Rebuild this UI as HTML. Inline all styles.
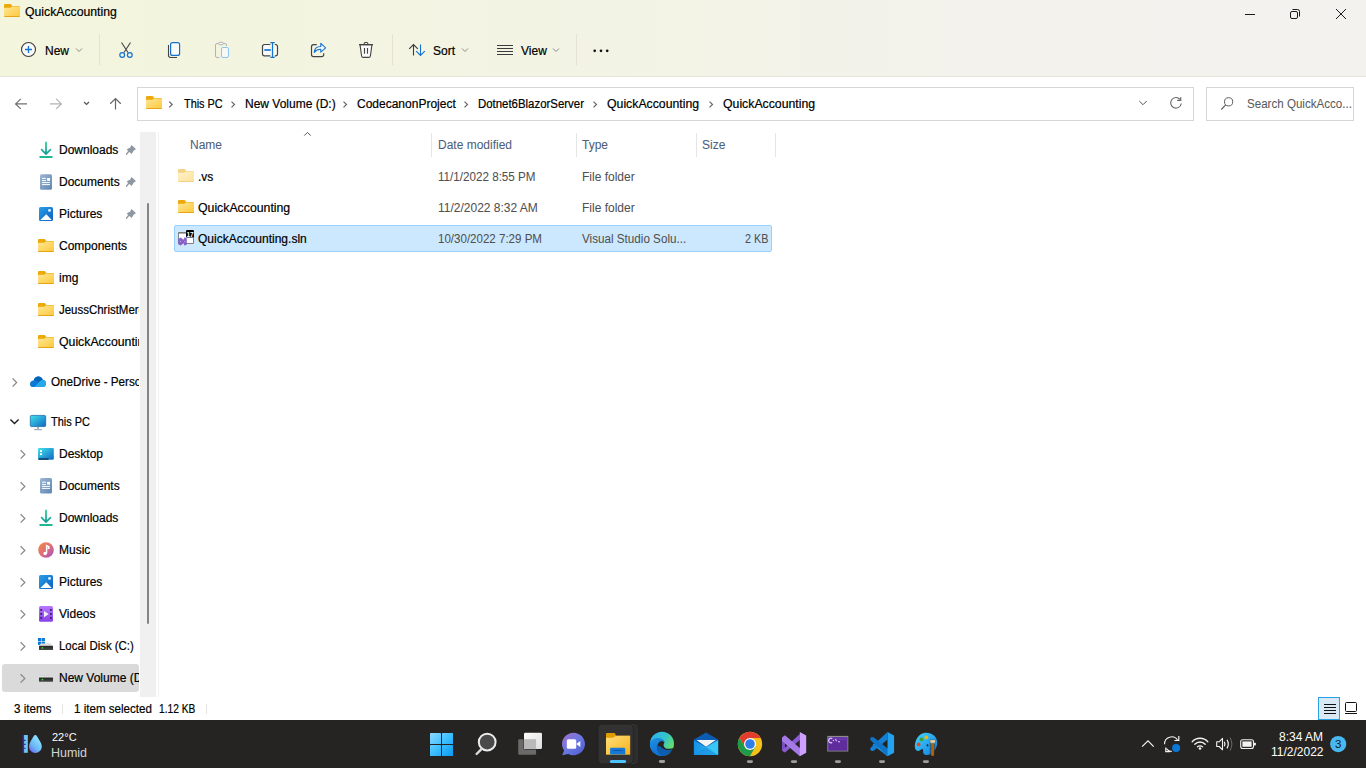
<!DOCTYPE html>
<html><head><meta charset="utf-8">
<style>
*{margin:0;padding:0;box-sizing:border-box}
html,body{width:1366px;height:768px;overflow:hidden;background:#fff;font-family:"Liberation Sans",sans-serif;font-size:12px;color:#000}
.a{position:absolute}
.t{position:absolute;white-space:nowrap;line-height:12px;font-size:12px;transform-origin:0 0;-webkit-text-stroke:0.2px currentColor}
svg{position:absolute;overflow:visible}
#top{left:0;top:0;width:1366px;height:77px;background:linear-gradient(90deg,#f4f5dd 0%,#f3f4e1 25%,#f3f3e6 50%,#f3f2ec 70%,#f3f2ef 100%);border-bottom:1px solid #e6e5da}
.sep{position:absolute;width:1px;background:#e3e2d4}
.chev{stroke:#8a8a8a;fill:none;stroke-width:1}
.bc{stroke:#6b6b6b;fill:none;stroke-width:1.1}
</style></head><body>
<div id="top" class="a"></div>

<!-- Title -->
<div class="t" style="left:25px;top:6px;transform:scaleX(1.02)">QuickAccounting</div>

<!-- Toolbar text -->
<div class="t" style="left:45px;top:45px">New</div>
<div class="t" style="left:433px;top:45px">Sort</div>
<div class="t" style="left:521px;top:45px">View</div>
<div class="sep" style="left:99px;top:34px;height:31px"></div>
<div class="sep" style="left:392px;top:34px;height:31px"></div>
<div class="sep" style="left:576px;top:34px;height:31px"></div>

<!-- Address bar -->
<div class="a" style="left:137px;top:87px;width:1057px;height:34px;border:1px solid #d6d6d6;background:#fff"></div>
<div class="a" style="left:1206px;top:87px;width:148px;height:34px;border:1px solid #d6d6d6;background:#fff"></div>
<div class="t" style="left:184px;top:98px;transform:scaleX(.907)">This PC</div>
<div class="t" style="left:245px;top:98px">New Volume (D:)</div>
<div class="t" style="left:357px;top:98px">CodecanonProject</div>
<div class="t" style="left:478px;top:98px;transform:scaleX(.951)">Dotnet6BlazorServer</div>
<div class="t" style="left:607px;top:98px;transform:scaleX(1.023)">QuickAccounting</div>
<div class="t" style="left:723px;top:98px;transform:scaleX(1.023)">QuickAccounting</div>
<div class="t" style="left:1247px;top:98px;color:#5a5a5a;-webkit-text-stroke:0.05px #5a5a5a;transform:scaleX(.965)">Search QuickAcco...</div>

<!-- Nav pane -->
<div class="a" style="left:140px;top:132px;width:16px;height:565px;background:#f0f0f0"></div>
<div class="a" style="left:147px;top:203px;width:2px;height:421px;background:#858585;border-radius:1px"></div>
<div class="a" style="left:158px;top:132px;width:1px;height:565px;background:#f3f3f3"></div>
<div class="a" style="left:2px;top:664px;width:137px;height:28px;background:#dadada;border-radius:3px"></div>

<div class="a" style="left:0;top:132px;width:139px;height:565px;overflow:hidden">
<div class="t" style="left:59px;top:12px">Downloads</div>
<div class="t" style="left:59px;top:44px">Documents</div>
<div class="t" style="left:59px;top:76px">Pictures</div>
<div class="t" style="left:59px;top:108px">Components</div>
<div class="t" style="left:59px;top:140px">img</div>
<div class="t" style="left:59px;top:172px;transform:scaleX(.955)">JeussChristMercy</div>
<div class="t" style="left:59px;top:204px;transform:scaleX(1.024)">QuickAccounting</div>
<div class="t" style="left:51px;top:244px;transform:scaleX(.975)">OneDrive - Personal</div>
<div class="t" style="left:51px;top:284px;transform:scaleX(.91)">This PC</div>
<div class="t" style="left:59px;top:316px">Desktop</div>
<div class="t" style="left:59px;top:348px">Documents</div>
<div class="t" style="left:59px;top:380px">Downloads</div>
<div class="t" style="left:59px;top:412px">Music</div>
<div class="t" style="left:59px;top:444px">Pictures</div>
<div class="t" style="left:59px;top:476px">Videos</div>
<div class="t" style="left:59px;top:508px;transform:scaleX(.95)">Local Disk (C:)</div>
<div class="t" style="left:59px;top:540px">New Volume (D:)</div>
</div>

<!-- File list header -->
<div class="t" style="left:190px;top:139px;color:#4c607a;-webkit-text-stroke:0.05px #4c607a">Name</div>
<div class="t" style="left:438px;top:139px;color:#4c607a;-webkit-text-stroke:0.05px #4c607a">Date modified</div>
<div class="t" style="left:582px;top:139px;color:#4c607a;-webkit-text-stroke:0.05px #4c607a">Type</div>
<div class="t" style="left:702px;top:139px;color:#4c607a;-webkit-text-stroke:0.05px #4c607a">Size</div>
<div class="a" style="left:431px;top:133px;width:1px;height:24px;background:#e5e5e5"></div>
<div class="a" style="left:576px;top:133px;width:1px;height:24px;background:#e5e5e5"></div>
<div class="a" style="left:696px;top:133px;width:1px;height:24px;background:#e5e5e5"></div>
<div class="a" style="left:775px;top:133px;width:1px;height:24px;background:#e5e5e5"></div>

<!-- Rows -->
<div class="a" style="left:174px;top:225px;width:598px;height:27px;background:#cce8ff;border:1px solid #99d1ff;border-radius:2px"></div>
<div class="t" style="left:198px;top:171px">.vs</div>
<div class="t" style="left:438px;top:171px;color:#505050;-webkit-text-stroke:0.05px #505050;transform:scaleX(.97)">11/1/2022 8:55 PM</div>
<div class="t" style="left:582px;top:171px;color:#505050;-webkit-text-stroke:0.05px #505050">File folder</div>
<div class="t" style="left:198px;top:202px;transform:scaleX(1.024)">QuickAccounting</div>
<div class="t" style="left:438px;top:202px;color:#505050;-webkit-text-stroke:0.05px #505050">11/2/2022 8:32 AM</div>
<div class="t" style="left:582px;top:202px;color:#505050;-webkit-text-stroke:0.05px #505050">File folder</div>
<div class="t" style="left:198px;top:233px">QuickAccounting.sln</div>
<div class="t" style="left:438px;top:233px;color:#505050;-webkit-text-stroke:0.05px #505050;transform:scaleX(.962)">10/30/2022 7:29 PM</div>
<div class="t" style="left:582px;top:233px;color:#505050;-webkit-text-stroke:0.05px #505050;transform:scaleX(.972)">Visual Studio Solu...</div>
<div class="t" style="left:745px;top:233px;color:#505050;-webkit-text-stroke:0.05px #505050;transform:scaleX(.9)">2 KB</div>

<!-- Status bar -->
<div class="t" style="left:14px;top:703px;transform:scaleX(.967)">3 items</div>
<div class="a" style="left:62px;top:704px;width:1px;height:10px;background:#e5e5e5"></div>
<div class="t" style="left:74px;top:703px;transform:scaleX(.965)">1 item selected</div>
<div class="t" style="left:159px;top:703px;transform:scaleX(.85)">1.12 KB</div>
<div class="a" style="left:206px;top:704px;width:1px;height:10px;background:#e5e5e5"></div>

<!-- Taskbar -->
<div class="a" style="left:0;top:720px;width:1366px;height:48px;background:#252422"></div>
<div class="t" style="left:52px;top:732px;color:#fff;font-size:11px;line-height:11px;-webkit-text-stroke:0">22°C</div>
<div class="t" style="left:51px;top:747px;color:#d4d4d4;transform:scaleX(1.04);-webkit-text-stroke:0">Humid</div>
<div class="t" style="left:1279px;top:731px;color:#fff;-webkit-text-stroke:0">8:34 AM</div>
<div class="t" style="left:1271px;top:746px;color:#fff;-webkit-text-stroke:0">11/2/2022</div>


<svg width="1366" height="768" style="left:0;top:0" viewBox="0 0 1366 768">
<defs>
<linearGradient id="gFront" x1="0" y1="0" x2="1" y2="1"><stop offset="0" stop-color="#ffe597"/><stop offset="1" stop-color="#fcc93a"/></linearGradient>
<symbol id="fold" viewBox="0 0 16 13">
<path d="M0,1.3 Q0,0 1.3,0 H6.2 Q6.8,0 7.3,0.6 L8.3,2 H14.7 Q16,2 16,3.3 V11.7 Q16,13 14.7,13 H1.3 Q0,13 0,11.7 Z" fill="#eba90a"/>
<path d="M0,4.6 Q0,3.8 0.9,3.8 H6.4 L7.6,2.6 H15.1 Q16,2.6 16,3.5 V11.7 Q16,13 14.7,13 H1.3 Q0,13 0,11.7 Z" fill="url(#gFront)"/>
<rect x="0.3" y="12" width="15.4" height="1" rx="0.5" fill="#e6a516"/>
</symbol>
<linearGradient id="gDl" x1="0" y1="0" x2="0" y2="1"><stop offset="0" stop-color="#33d28f"/><stop offset="1" stop-color="#0e9c9c"/></linearGradient>
<linearGradient id="gDoc" x1="0" y1="0" x2="1" y2="1"><stop offset="0" stop-color="#9db6d3"/><stop offset="1" stop-color="#5f86b2"/></linearGradient>
<linearGradient id="gPic" x1="0" y1="0" x2="1" y2="1"><stop offset="0" stop-color="#2aa0ea"/><stop offset="1" stop-color="#0a5fc0"/></linearGradient>
<linearGradient id="gMon" x1="0" y1="0" x2="1" y2="1"><stop offset="0" stop-color="#40e2ec"/><stop offset="1" stop-color="#1266c2"/></linearGradient>
<linearGradient id="gMus" x1="0" y1="0" x2="1" y2="1"><stop offset="0" stop-color="#f5893a"/><stop offset=".55" stop-color="#dc6c80"/><stop offset="1" stop-color="#9a4ccc"/></linearGradient>
<linearGradient id="gVid" x1="0" y1="0" x2="0" y2="1"><stop offset="0" stop-color="#b777ff"/><stop offset="1" stop-color="#8740e6"/></linearGradient>
<linearGradient id="gDrv" x1="0" y1="0" x2="0" y2="1"><stop offset="0" stop-color="#222"/><stop offset="1" stop-color="#4a4a4a"/></linearGradient>
<symbol id="pin" viewBox="0 0 10 10">
<path d="M5.6,0.1 L10,4.3 L7.8,5.4 L5.6,8.9 L0.6,4.6 L4.2,2.6 Z" fill="#8b97a3"/>
<path d="M2.8,6.3 L0.3,9.4" stroke="#8b97a3" stroke-width="1.4" stroke-linecap="round"/>
</symbol>
<symbol id="drive" viewBox="0 0 14 8">
<linearGradient id="gDrvTop" x1="0" y1="0" x2="0" y2="1"><stop offset="0" stop-color="#cbcbcb"/><stop offset="1" stop-color="#f4f4f4"/></linearGradient>
<path d="M2,0 H11.4 L14,2.8 H0 Z" fill="url(#gDrvTop)"/>
<rect x="0" y="2.6" width="14" height="4.2" rx="0.5" fill="url(#gDrv)"/>
<circle cx="3.4" cy="4.6" r="0.9" fill="#3ddc3d"/>
</symbol>
</defs>

<!-- title -->
<use href="#fold" x="4" y="4" width="16" height="13"/>
<g stroke="#1a1a1a" fill="none" stroke-width="1">
<path d="M1245,14.5 H1255"/>
<rect x="1290.5" y="11.5" width="7" height="7" rx="1.5"/>
<path d="M1292.5,9.5 H1297.5 Q1299.5,9.5 1299.5,11.5 V16.5"/>
<path d="M1336,9 L1346,19 M1346,9 L1336,19"/>
</g>

<!-- toolbar -->
<circle cx="28.5" cy="49.5" r="7" fill="#fafafa" stroke="#3c3c3c" stroke-width="1.1"/>
<path d="M25,49.5 H32 M28.5,46 V53" stroke="#1472d0" stroke-width="1.3"/>
<g stroke="#8a8a8a" fill="none" stroke-width="1">
<path d="M76,48.5 L79,51.5 L82,48.5"/>
<path d="M462,48.5 L465,51.5 L468,48.5"/>
<path d="M553,48.5 L556,51.5 L559,48.5"/>
</g>
<path d="M121.5,42.5 L128,52.5 M130.5,42.5 L124,52.5" stroke="#444" stroke-width="1.1" fill="none"/>
<circle cx="122.2" cy="55" r="2.4" stroke="#1472d0" stroke-width="1.2" fill="none"/>
<circle cx="129.8" cy="55" r="2.4" stroke="#1472d0" stroke-width="1.2" fill="none"/>
<path d="M168.5,45 V55.3 Q168.5,57.5 170.7,57.5 H177" stroke="#444" stroke-width="1.1" fill="none"/>
<rect x="170.6" y="42.6" width="9" height="12.8" rx="2" stroke="#1472d0" stroke-width="1.2" fill="#fafafa"/>
<path d="M226.5,46 V45 Q226.5,43.5 225,43.5 H217 Q215.5,43.5 215.5,45 V56 Q215.5,57.5 217,57.5 H219.5" stroke="#b3b3b3" stroke-width="1" fill="none"/>
<rect x="218.6" y="42.3" width="4.8" height="2.4" rx="1.2" stroke="#b3b3b3" stroke-width="1" fill="#f6f6f0"/>
<rect x="221.5" y="47.5" width="7" height="10" rx="1.5" stroke="#8ec5ef" stroke-width="1" fill="#f8f8f6"/>
<path d="M270.3,44.5 H264.6 Q262.5,44.5 262.5,46.6 V53.7 Q262.5,55.8 264.6,55.8 H270.3 M274.8,44.5 H275.4 Q277.5,44.5 277.5,46.6 V53.7 Q277.5,55.8 275.4,55.8 H274.8" stroke="#444" stroke-width="1.2" fill="#fafafa"/>
<path d="M272.5,42.6 V57.4 M270.3,42.6 H274.7 M270.3,57.4 H274.7" stroke="#1472d0" stroke-width="1.2" fill="none"/>
<path d="M264.3,50 H270.8" stroke="#1472d0" stroke-width="1.7"/>
<path d="M316.7,44.6 H313.6 Q311.5,44.6 311.5,46.7 V54.6 Q311.5,56.7 313.6,56.7 H321.6 Q323.7,56.7 323.7,54.6 V53.3" stroke="#444" stroke-width="1.2" fill="none"/>
<path d="M314.2,52.4 C314.6,48.2 317.2,46.5 320.8,46.5 V43.4 L325.6,47.8 L320.8,52.2 V49.3 C318,49.3 315.9,50.3 314.2,52.4 Z" stroke="#1472d0" stroke-width="1.1" fill="#fafafa" stroke-linejoin="round"/>
<path d="M360,44.6 L361.6,56 Q361.8,57.4 363.2,57.4 H368.8 Q370.2,57.4 370.4,56 L372,44.6 Z" fill="#fafafa" stroke="#444" stroke-width="1.1"/>
<path d="M359,44.6 H373 M364.2,44.4 V43.6 Q364.2,42.5 365.3,42.5 H366.7 Q367.8,42.5 367.8,43.6 V44.4 M364.5,48 V53.7 M367.5,48 V53.7" stroke="#444" stroke-width="1.1" fill="none"/>
<path d="M413.5,55.6 V44.6 M409.2,48.8 L413.5,44.5 L417.8,48.8" stroke="#3c3c3c" stroke-width="1.1" fill="none"/>
<path d="M420.5,44.4 V55.4 M416.2,51.2 L420.5,55.5 L424.8,51.2" stroke="#1472d0" stroke-width="1.1" fill="none"/>
<path d="M497,45.5 H513 M497,48.5 H513 M497,51.5 H513 M497,54.5 H513" stroke="#3c3c3c" stroke-width="1"/>
<circle cx="594.7" cy="50.8" r="1.35" fill="#111"/>
<circle cx="601" cy="50.8" r="1.35" fill="#111"/>
<circle cx="607.2" cy="50.8" r="1.35" fill="#111"/>

<!-- address row -->
<path d="M27,103.9 H15.6 M20.8,98.9 L15.6,103.9 L20.8,108.9" stroke="#6f6f6f" stroke-width="1.2" fill="none"/>
<path d="M50,103.9 H61.4 M56.2,98.9 L61.4,103.9 L56.2,108.9" stroke="#b2b2b2" stroke-width="1.2" fill="none"/>
<path d="M84,102 L86.5,104.5 L89,102" stroke="#555" stroke-width="1.2" fill="none"/>
<path d="M115.5,109.6 V98.6 M110.2,103.7 L115.5,98.5 L120.8,103.7" stroke="#666" stroke-width="1.2" fill="none"/>
<use href="#fold" x="146" y="96" width="16" height="13"/>
<g stroke="#666" stroke-width="1.2" fill="none">
<path d="M169.2,101.6 L172.2,104.5 L169.2,107.4"/>
<path d="M231.5,101.6 L234.5,104.5 L231.5,107.4"/>
<path d="M343.5,101.6 L346.5,104.5 L343.5,107.4"/>
<path d="M464.5,101.6 L467.5,104.5 L464.5,107.4"/>
<path d="M593.5,101.6 L596.5,104.5 L593.5,107.4"/>
<path d="M709.5,101.6 L712.5,104.5 L709.5,107.4"/>
</g>
<path d="M1139.3,101 L1143,104.7 L1146.7,101" stroke="#555" stroke-width="1" fill="none"/>
<path d="M1180,99.3 A5.3,5.3 0 1 0 1181.25,103.5" stroke="#666" stroke-width="1.1" fill="none"/>
<path d="M1180.7,97.2 V100.4 H1177.2" stroke="#666" stroke-width="1.2" fill="none"/>
<circle cx="1228.6" cy="101.8" r="4.1" stroke="#5f5f5f" stroke-width="1" fill="none"/>
<path d="M1225.7,104.9 L1221.3,109.5" stroke="#5f5f5f" stroke-width="1.1"/>

<!-- nav pane (clipped) -->
<svg x="0" y="132" width="139" height="565" viewBox="0 132 139 565" style="position:static">
<path d="M46,142.4 V154 M41.6,149.7 L46,154.1 L50.4,149.7" stroke="url(#gDl)" stroke-width="1.8" fill="none" stroke-linecap="round"/>
<path d="M40.2,157 H51.8" stroke="#1fb894" stroke-width="1.8" stroke-linecap="round"/>
<use href="#pin" x="126" y="145" width="10" height="10"/>
<rect x="40" y="174.2" width="12" height="15.6" rx="1.5" fill="url(#gDoc)"/>
<path d="M42,178.4 H46 M42,180.6 H46 M42,182.6 H50 M42,184.6 H50" stroke="#fff" stroke-width="1"/>
<rect x="47.1" y="178" width="2.9" height="2.9" fill="#fff"/>
<use href="#pin" x="126" y="177" width="10" height="10"/>
<rect x="39" y="207" width="14" height="14" rx="1.6" fill="url(#gPic)"/>
<path d="M40.3,220 L46.3,214.3 L51.8,220 Z" fill="#fff"/>
<circle cx="49.5" cy="210.4" r="1.3" fill="#fff"/>
<use href="#pin" x="126" y="209" width="10" height="10"/>
<use href="#fold" x="38" y="239" width="16" height="13"/>
<use href="#fold" x="38" y="271" width="16" height="13"/>
<use href="#fold" x="38" y="303" width="16" height="13"/>
<use href="#fold" x="38" y="335" width="16" height="13"/>
<path d="M12.6,378.4 L16.6,382.5 L12.6,386.6" stroke="#8a8a8a" stroke-width="1.3" fill="none"/>
<path d="M32.5,386.9 C30.5,386.9 30,385.3 30,384 C30,381.8 31.6,380.6 33.6,380.6 C34.2,378 36.2,376.6 38.4,376.6 C40.6,376.6 42.2,378 42.8,380 C44.8,380 46,381.6 46,383.4 C46,385.4 44.8,386.9 43,386.9 Z" fill="#0a78d4"/>
<path d="M33.6,380.6 C34.2,378 36.2,376.6 38.4,376.6 C40.6,376.6 42.2,378 42.8,380 C41,380.2 39.8,381 38.9,382.2 C37.5,381 35.8,380.5 33.6,380.6 Z" fill="#0364b8"/>
<path d="M34.5,386.9 L38.9,382.2 C39.8,381 41,380.2 42.8,380 C44.8,380 46,381.6 46,383.4 C46,385.4 44.8,386.9 43,386.9 Z" fill="#28a8ea"/>
<path d="M10.4,419.4 L14.5,423.6 L18.6,419.4" stroke="#1f1f1f" stroke-width="1.4" fill="none"/>
<rect x="30.3" y="415.4" width="15.4" height="11.2" rx="1.2" fill="url(#gMon)" stroke="#0d5f9c" stroke-width="0.7"/>
<rect x="37" y="426.9" width="2" height="2.3" fill="#a6b0bc"/>
<rect x="34" y="429" width="8" height="1.2" rx="0.5" fill="#a6b0bc"/>
<g stroke="#8a8a8a" stroke-width="1.3" fill="none">
<path d="M20.6,450.2 L24.8,454.4 L20.6,458.6"/>
<path d="M20.6,482.2 L24.8,486.4 L20.6,490.6"/>
<path d="M20.6,514.2 L24.8,518.4 L20.6,522.6"/>
<path d="M20.6,546.2 L24.8,550.4 L20.6,554.6"/>
<path d="M20.6,578.2 L24.8,582.4 L20.6,586.6"/>
<path d="M20.6,610.2 L24.8,614.4 L20.6,618.6"/>
<path d="M20.6,642.2 L24.8,646.4 L20.6,650.6"/>
<path d="M20.6,674.2 L24.8,678.4 L20.6,682.6"/>
</g>
<rect x="38" y="448" width="15.8" height="11.8" rx="1.2" fill="url(#gMon)"/>
<rect x="38.5" y="458.2" width="10" height="1.6" fill="#0b3f6a"/>
<rect x="40" y="450.1" width="2" height="1.9" fill="#fff"/>
<rect x="40" y="453.2" width="2" height="1.9" fill="#fff"/>
<rect x="40" y="478" width="12" height="15.6" rx="1.5" fill="url(#gDoc)"/>
<path d="M42,482.2 H46 M42,484.4 H46 M42,486.4 H50 M42,488.4 H50" stroke="#fff" stroke-width="1"/>
<rect x="47.1" y="481.8" width="2.9" height="2.9" fill="#fff"/>
<path d="M46,510.4 V522 M41.6,517.7 L46,522.1 L50.4,517.7" stroke="url(#gDl)" stroke-width="1.8" fill="none" stroke-linecap="round"/>
<path d="M40.2,525 H51.8" stroke="#1fb894" stroke-width="1.8" stroke-linecap="round"/>
<circle cx="46" cy="550" r="7.8" fill="url(#gMus)"/>
<path d="M46.6,553.5 V545.6 L48.8,546.6 V548.3 L47.6,548" stroke="#fff" stroke-width="1.4" fill="none"/>
<circle cx="45.1" cy="553.5" r="1.7" fill="#fff"/>
<rect x="39" y="575" width="14" height="14" rx="1.6" fill="url(#gPic)"/>
<path d="M40.3,588 L46.3,582.3 L51.8,588 Z" fill="#fff"/>
<circle cx="49.5" cy="578.4" r="1.3" fill="#fff"/>
<rect x="39" y="606.1" width="14" height="15.7" rx="1.6" fill="url(#gVid)"/>
<g fill="#3a2266">
<rect x="40.3" y="609" width="1.8" height="1.8"/><rect x="40.3" y="613" width="1.8" height="1.8"/><rect x="40.3" y="617" width="1.8" height="1.8"/>
<rect x="50" y="609" width="1.8" height="1.8"/><rect x="50" y="613" width="1.8" height="1.8"/><rect x="50" y="617" width="1.8" height="1.8"/>
</g>
<path d="M44,611 V617.3 L48.7,614 Z" fill="#f2f2f2"/>
<g fill="#0a78d8">
<rect x="38" y="638" width="3.2" height="3.2"/><rect x="41.7" y="638" width="3.2" height="3.2"/>
<rect x="38" y="641.7" width="3.2" height="3.2"/><rect x="41.7" y="641.7" width="3.2" height="3.2"/>
</g>
<use href="#drive" x="39" y="643.2" width="14" height="8"/>
<use href="#drive" x="39" y="675" width="14" height="8"/>
</svg>

<!-- file list -->
<path d="M304.3,135.6 L307.5,132.4 L310.7,135.6" stroke="#555" stroke-width="1" fill="none"/>
<use href="#fold" x="178" y="169" width="16" height="13" opacity="0.5"/>
<use href="#fold" x="178" y="200" width="16" height="13"/>
<path d="M178.5,243.5 V232.5 H186 M186,243.5 H193.5 V237.5" stroke="#808080" stroke-width="1" fill="#fff"/>
<rect x="179" y="233.5" width="7" height="4" fill="#fff"/>
<rect x="179" y="237.5" width="14" height="5.5" fill="#fff"/>
<rect x="178.5" y="232" width="7.5" height="1.6" fill="#7a7a7a"/>
<rect x="186" y="230" width="8" height="7.6" rx="1.2" fill="#000"/>
<text x="190" y="236.6" font-family="Liberation Sans" font-size="6.5" font-weight="bold" fill="#fff" text-anchor="middle">17</text>
<path d="M178.2,239 L180.8,237.4 L183.3,239.8 L184.8,237.2 L186.8,238.4 V244.6 L184.8,245.8 L183.3,243.3 L180.8,245.6 L178.2,244.2 Z" fill="#8661c5"/>
<circle cx="180.4" cy="241.5" r="0.6" fill="#c9b3ee"/><circle cx="184.8" cy="241.5" r="0.6" fill="#c9b3ee"/>

<!-- view buttons -->
<rect x="1318.5" y="697.5" width="21" height="22" fill="#d8e9f5" stroke="#27a0e4" stroke-width="1"/>
<path d="M1324,704.5 H1336 M1324,707.5 H1336 M1324,710.5 H1336 M1324,713.5 H1336" stroke="#111" stroke-width="1"/>
<rect x="1345.5" y="702.5" width="11" height="9" rx="1" stroke="#111" stroke-width="1" fill="none"/>
<path d="M1345,713.5 H1357" stroke="#111" stroke-width="1"/>
</svg>


<svg width="1366" height="48" style="left:0;top:720px" viewBox="0 720 1366 48">
<defs>
<linearGradient id="gStart" gradientUnits="userSpaceOnUse" x1="430" y1="733" x2="453" y2="756"><stop offset="0" stop-color="#8fd8ff"/><stop offset=".5" stop-color="#3cc0ff"/><stop offset="1" stop-color="#0a98f2"/></linearGradient>
<linearGradient id="gTeams" x1="0" y1="0" x2="1" y2="1"><stop offset="0" stop-color="#a46ecb"/><stop offset=".5" stop-color="#6c78e0"/><stop offset="1" stop-color="#4b5ad0"/></linearGradient>
<linearGradient id="gTv" x1="0" y1="0" x2="1" y2="1"><stop offset="0" stop-color="#ffffff"/><stop offset="1" stop-color="#dcdcdc"/></linearGradient>
<linearGradient id="gFx" x1="0" y1="0" x2="1" y2="1"><stop offset="0" stop-color="#ffe07a"/><stop offset="1" stop-color="#f7b21a"/></linearGradient>
<linearGradient id="gEdge1" x1="0" y1="0" x2="1" y2="1"><stop offset="0" stop-color="#1fa6e8"/><stop offset=".6" stop-color="#38c6b8"/><stop offset="1" stop-color="#6ae05a"/></linearGradient>
<linearGradient id="gMail" x1="0" y1="0" x2="1" y2="0"><stop offset="0" stop-color="#1592e6"/><stop offset="1" stop-color="#35c3f5"/></linearGradient>
<linearGradient id="gPaint" x1="0" y1="0" x2="1" y2="1"><stop offset="0" stop-color="#46d4ff"/><stop offset="1" stop-color="#0f7fe0"/></linearGradient>
</defs>
<!-- weather -->
<rect x="24" y="735" width="3.8" height="17.8" fill="#6cc8f6"/>
<rect x="22.6" y="735" width="1.5" height="17.8" fill="#4a2596"/>
<path d="M24,740.4 H25.6 M24,744.4 H25.6 M24,748.2 H25.6" stroke="#4a2596" stroke-width="1.1"/>
<defs><linearGradient id="gDrop" x1=".75" y1=".3" x2=".25" y2="1"><stop offset="0" stop-color="#86dcff"/><stop offset=".55" stop-color="#6ab8f4"/><stop offset="1" stop-color="#6e6cf0"/></linearGradient></defs>
<path d="M35.3,735 C36,735 36.6,735.6 37.3,736.8 C39.2,740 41.8,743.4 41.8,746.6 C41.8,750.3 38.8,753 35.3,753 C31.8,753 29,750.3 29,746.6 C29,743.4 31.4,740 33.3,736.8 C34,735.6 34.6,735 35.3,735 Z" fill="url(#gDrop)"/>

<!-- start -->
<rect x="430" y="733" width="11" height="11" rx="0.6" fill="url(#gStart)"/>
<rect x="442" y="733" width="11" height="11" rx="0.6" fill="url(#gStart)"/>
<rect x="430" y="745" width="11" height="11" rx="0.6" fill="url(#gStart)"/>
<rect x="442" y="745" width="11" height="11" rx="0.6" fill="url(#gStart)"/>
<!-- search -->
<circle cx="487.2" cy="742.1" r="8.4" fill="#4a4a4a" stroke="#ececec" stroke-width="2"/>
<path d="M481.2,749.4 L476.6,754" stroke="#dcdcdc" stroke-width="2.4" stroke-linecap="round"/>
<!-- task view -->
<rect x="518.2" y="739.2" width="17.9" height="15.5" rx="1.2" fill="#6a6a6a"/>
<rect x="523.6" y="732.4" width="18.8" height="17" rx="1.5" fill="#1c1c1c"/>
<rect x="524" y="732.8" width="18" height="16.2" rx="1.2" fill="url(#gTv)"/>
<rect x="524" y="739.2" width="12.1" height="9.8" fill="#b9b9b9"/>
<!-- teams chat -->
<path d="M573.5,732.7 C579.8,732.7 585,737.8 585,744 C585,750.2 579.8,755.2 573.5,755.2 C571.6,755.2 569.8,754.7 568.2,753.9 L562.2,755.2 L564.2,750.3 C562.8,748.5 562,746.3 562,744 C562,737.8 567.2,732.7 573.5,732.7 Z" fill="url(#gTeams)"/>
<rect x="566.8" y="739.2" width="9.4" height="9.5" rx="1.5" fill="#fff"/>
<path d="M576.2,743.9 L580.3,740.9 V746.9 Z" fill="#fff"/>

<!-- explorer active -->
<rect x="628.5" y="724.8" width="8.6" height="38.6" rx="3" fill="#2c2c2c" stroke="#3b3b3b" stroke-width="0.8"/>
<rect x="598.3" y="724.3" width="34.8" height="39.4" rx="4" fill="#323232" stroke="#202020" stroke-width="0.9"/>
<rect x="599" y="725" width="33.4" height="38" rx="3.5" fill="none" stroke="#3a3a3a" stroke-width="0.5"/>
<path d="M606,734 Q606,733 607,733 H614.6 L616.2,735.8 H630.1 V754.6 H606 Z" fill="#e09d00"/>
<path d="M606,737.8 H612.8 L616.4,735.8 H630.1 V754.6 H606 Z" fill="url(#gFx)"/>
<rect x="610.1" y="747.7" width="15.2" height="6.9" rx="1.2" fill="#1779d6"/>
<rect x="613" y="750" width="9.4" height="0.9" fill="#0a55a8"/>
<rect x="609.8" y="759.9" width="16.3" height="3.1" rx="1.5" fill="#4cc2ff"/>
<!-- edge -->
<defs>
<linearGradient id="gEdgeTop" gradientUnits="userSpaceOnUse" x1="652" y1="734" x2="674" y2="748"><stop offset="0" stop-color="#2db4f0"/><stop offset=".5" stop-color="#33c4c8"/><stop offset="1" stop-color="#72e257"/></linearGradient>
<linearGradient id="gEdgeL" gradientUnits="userSpaceOnUse" x1="650" y1="740" x2="660" y2="756"><stop offset="0" stop-color="#1e8fe2"/><stop offset="1" stop-color="#0b6ad2"/></linearGradient>
</defs>
<circle cx="662" cy="743.8" r="12" fill="url(#gEdgeTop)"/>
<path d="M658.6,741.6 C660.6,740 663.6,740.4 664.5,742.6 C663.1,744.2 663.2,746.6 665.1,747.9 C667.1,749.1 670.6,749.1 674.2,748 L674.2,752.5 H656.8 V744 Z" fill="#252422"/>
<path d="M657.3,747 C658,745.4 660,746 661.5,747.5 C664,749.8 668.2,750.6 672.4,749.2 C670.6,753.3 666.6,756 662,756 C659.3,756 657.3,752 657.3,747 Z" fill="#0e5cae"/>
<path d="M650,744.5 C650,740.3 653.8,738 658,738 C661.2,738 663.8,739.5 664.6,742 C663.2,740.8 661.5,740.6 660,741.6 C658.3,742.8 657.3,745 657.3,748 C657.3,752 659.8,754.9 663,755.9 C662.6,756 662.3,756 662,756 C655.4,756 650,750.8 650,744.5 Z" fill="url(#gEdgeL)"/>
<rect x="658.9" y="760.1" width="6.2" height="2.9" rx="1.45" fill="#9e9e9e"/>
<!-- mail -->
<path d="M693.9,739.6 L706,732.6 L718.1,739.6 V755 H693.9 Z" fill="#0b5db3"/>
<path d="M696.5,740 H715.8 L706,746.8 Z" fill="#f4f4f4"/>
<path d="M693.9,740.2 L706,747.2 L718.1,740.2 V755 H693.9 Z" fill="url(#gMail)"/>
<path d="M706,747.2 L718.1,740.2 V755 Z" fill="#38c6f6"/>
<path d="M693.9,755 L706,747.2 L718.1,755 Z" fill="#1a8fe0" opacity=".6"/>
<!-- chrome -->
<circle cx="750" cy="744" r="12.2" fill="#f5c21b"/>
<path d="M750,738 L760.6,738 A12.2,12.2 0 0 0 739.5,737.8 L744.8,747 Z" fill="#e33b2e"/>
<path d="M744.8,747 L739.5,737.8 A12.2,12.2 0 0 0 749.9,756.2 L755.2,747 Z" fill="#1f9a4a"/>
<circle cx="750" cy="744" r="6" fill="#fff"/>
<circle cx="750" cy="744" r="4.8" fill="#2f7de8"/>
<rect x="746.9" y="760.2" width="6.1" height="2.8" rx="1.4" fill="#9e9e9e"/>
<!-- visual studio -->
<path d="M782,737.5 V750.5 L785,752.5 V739.5 Z" fill="#7a50c2"/>
<path d="M782,750.5 L785,752.5 L799.8,740 V734 Z" fill="#8a5bd2"/>
<path d="M782,737.5 L785,735.3 L804,751.8 L799.8,756.2 L782,741 Z" fill="#a57ae6"/>
<path d="M799.8,732 L806.2,735.5 V752.7 L799.8,756.2 Z" fill="#cfa0ff"/>
<rect x="790.9" y="760.2" width="6.2" height="2.8" rx="1.4" fill="#9e9e9e"/>
<!-- terminal -->
<rect x="827.3" y="735.9" width="21" height="15.6" fill="#8a8d88"/>
<rect x="828.2" y="737.2" width="19.2" height="13.5" fill="#5e2c9c"/>
<rect x="828.2" y="737.2" width="19.2" height="3" fill="#6a36aa"/>
<path d="M832.2,738.6 A2.3,2.3 0 1 0 832.2,742.4" stroke="#d8c4f4" stroke-width="1.3" fill="none"/>
<circle cx="833.4" cy="740.6" r=".7" fill="#e8dcff"/>
<path d="M835.5,739 L836.6,741.4" stroke="#e8dcff" stroke-width="1"/>
<rect x="838.2" y="741" width="1.7" height="1.4" fill="#c8b0ee"/>
<rect x="834.9" y="760.2" width="6.1" height="2.8" rx="1.4" fill="#9e9e9e"/>
<!-- vscode -->
<path d="M887.5,732 L894.1,735.4 V752.8 L887.5,756.2 L872.5,744.5 L887.5,739.2 Z" fill="#23a2ef"/>
<path d="M887.5,732 L887.5,739.5 L874,750.4 Q871.2,752 870.4,749.8 Q869.8,748.4 871,747.3 Z" fill="#1380d6"/>
<path d="M887.5,756.2 V748.5 L874,737.6 Q871.2,736 870.4,738.2 Q869.8,739.6 871,740.7 Z" fill="#0f74c8"/>
<path d="M887.5,739.6 V748.4 L882,744 Z" fill="#232220"/>
<rect x="879" y="760.2" width="6" height="2.8" rx="1.4" fill="#9e9e9e"/>
<!-- paint -->
<path d="M926,732.7 C932.5,732.7 937.2,737 937.2,742.5 C937.2,748.5 933,755 926.5,755 C924.5,755 923.2,753.8 923.2,752 C923.2,750.6 923.4,749.6 922.6,749.2 C921.6,748.7 920.4,750.8 918.6,751 C916.4,751.2 914.8,749.4 914.8,746.5 C914.8,738.8 920,732.7 926,732.7 Z" fill="url(#gPaint)"/>
<circle cx="918.6" cy="744.4" r="1.9" fill="#e04a1a"/>
<circle cx="921.4" cy="739.4" r="1.9" fill="#3aa52a"/>
<circle cx="926.4" cy="737.4" r="1.9" fill="#f7b500"/>
<path d="M926.5,745.3 H928.6 M927.5,744.3 V746.4" stroke="#232323" stroke-width="1"/>
<rect x="929.8" y="739.6" width="5.4" height="16.6" fill="#252422" opacity=".5"/>
<rect x="930.3" y="740.1" width="4.7" height="2.6" fill="#f1cf9c"/>
<rect x="930.8" y="742.7" width="3.7" height="0.7" fill="#dcdcdc"/>
<rect x="931.1" y="743.4" width="3" height="12.4" fill="#b0600c"/>
<rect x="922.9" y="760.2" width="6.1" height="2.8" rx="1.4" fill="#9e9e9e"/>

<!-- tray -->
<path d="M1142.1,746.7 L1148,740.8 L1153.7,746.7" stroke="#f2f2f2" stroke-width="1.2" fill="none"/>
<path d="M1164.6,744.2 A7,7 0 0 1 1177.6,740.3" stroke="#f2f2f2" stroke-width="1.1" fill="none"/>
<path d="M1174.4,740.5 H1178.8 V736.1" stroke="#f2f2f2" stroke-width="1.2" fill="none"/>
<path d="M1171.8,751.6 A7,7 0 0 1 1166.4,748.6" stroke="#f2f2f2" stroke-width="1.1" fill="none"/>
<path d="M1165.8,747.5 V751.7 H1170" stroke="#f2f2f2" stroke-width="1.2" fill="none"/>
<circle cx="1176.1" cy="747.9" r="4" fill="#0a78d8"/>
<g stroke="#f2f2f2" stroke-width="1.3" fill="none" stroke-linecap="round">
<path d="M1192.2,741.7 A10.5,10.5 0 0 1 1207.8,741.7"/>
<path d="M1194.8,744.3 A7,7 0 0 1 1205.2,744.3"/>
<path d="M1197.4,746.9 A3.6,3.6 0 0 1 1202.6,746.9"/>
</g>
<circle cx="1200" cy="748.5" r="1.3" fill="#f2f2f2"/>
<path d="M1216.7,741.8 H1219.2 L1222.5,738.4 V749.8 L1219.2,746.5 H1216.7 Z" stroke="#f2f2f2" stroke-width="1.1" fill="none" stroke-linejoin="round"/>
<path d="M1224.3,741.8 Q1225.6,744 1224.3,746.3" stroke="#f2f2f2" stroke-width="1.2" fill="none"/>
<path d="M1227,739.8 Q1229.6,744 1227,748.4" stroke="#f2f2f2" stroke-width="1.2" fill="none"/>
<path d="M1230,737.5 Q1233.8,744 1230,750.6" stroke="#6a6a6a" stroke-width="1" fill="none"/>
<rect x="1240.7" y="739.7" width="12.8" height="8.8" rx="2" stroke="#f2f2f2" stroke-width="1.1" fill="none"/>
<rect x="1242.4" y="741.4" width="9.2" height="5.4" fill="#f2f2f2"/>
<rect x="1253.9" y="742.8" width="2" height="2.6" rx=".6" fill="#f2f2f2"/>
<circle cx="1338.2" cy="744.1" r="8.1" fill="#47b8f0"/>
<text x="1338.2" y="748.3" font-family="Liberation Sans" font-size="11.5" fill="#1a1a1a" text-anchor="middle">3</text>
</svg>

</body></html>
